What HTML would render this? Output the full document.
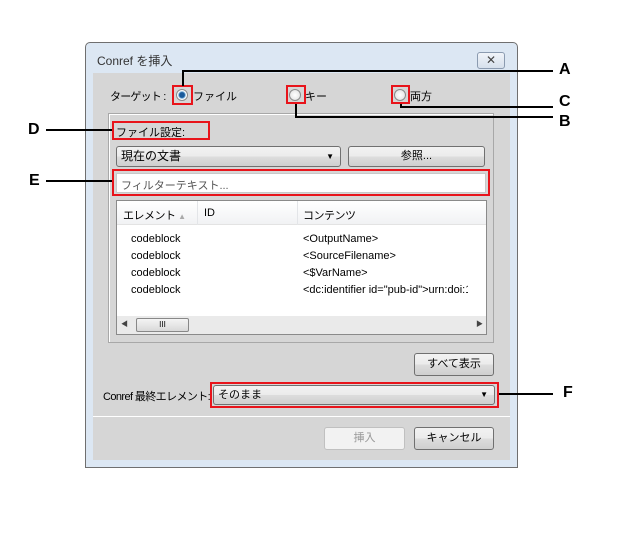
<!DOCTYPE html><html><head><meta charset="utf-8"><style>
body{margin:0;width:618px;height:547px;background:#fff;position:relative;font-family:"Liberation Sans","Noto Sans CJK JP",sans-serif;font-size:11px;color:#000;overflow:hidden}
.a{position:absolute;box-sizing:border-box}
.btn{border:1px solid #707070;border-radius:3px;background:linear-gradient(#f2f2f2,#ebebeb 50%,#dddddd 51%,#cfcfcf);text-align:center;line-height:19px}
.red{border:2px solid #e8141b}
.ln{background:#000}
.lbl{font-weight:bold;font-size:16px}
.rad{width:12px;height:12px;border-radius:50%;border:1px solid #8a8a8a;background:radial-gradient(#fff,#ddd)}
</style></head><body>
<div class="a" style="left:85px;top:42px;width:433px;height:426px;border:1px solid #6f6f6f;border-radius:5px 5px 0 0;background:#dce7f3"></div>
<div class="a" style="left:97px;top:52px;font-size:12px;color:#333">Conref を挿入</div>
<div class="a" style="left:477px;top:52px;width:28px;height:17px;border:1px solid #8b9bb0;border-radius:3px;background:linear-gradient(#f0f4f9,#d6e0ec);text-align:center;font-size:12px;line-height:15px;color:#444">✕</div>
<div class="a" style="left:93px;top:73px;width:417px;height:387px;background:#d6d6d6"></div>
<div class="a" style="left:110px;top:88px;letter-spacing:-0.8px">ターゲット :</div>
<div class="a red" style="left:172px;top:85px;width:21px;height:20px"></div>
<div class="a rad" style="left:176px;top:89px;background:radial-gradient(#1a5a9a 35%,#6aa8d8 45%,#fff 60%)"></div>
<div class="a" style="left:193px;top:88px">ファイル</div>
<div class="a red" style="left:286px;top:85px;width:20px;height:19px"></div>
<div class="a rad" style="left:289px;top:89px"></div>
<div class="a" style="left:305px;top:88px">キー</div>
<div class="a red" style="left:391px;top:85px;width:19px;height:19px"></div>
<div class="a rad" style="left:394px;top:89px"></div>
<div class="a" style="left:410px;top:88px">両方</div>
<div class="a" style="left:108px;top:113px;width:386px;height:230px;border:1px solid #a8a8a8;box-shadow:inset 1px 1px 0 #fff"></div>
<div class="a red" style="left:112px;top:121px;width:98px;height:19px"></div>
<div class="a" style="left:116px;top:124px">ファイル設定:</div>
<div class="a btn" style="left:116px;top:146px;width:225px;height:21px;text-align:left;padding-left:4px;font-size:12px">現在の文書<span style="position:absolute;right:6px;font-size:8px">▼</span></div>
<div class="a btn" style="left:348px;top:146px;width:137px;height:21px">参照...</div>
<div class="a red" style="left:112px;top:169px;width:378px;height:27px"></div>
<div class="a" style="left:116px;top:173px;width:370px;height:20px;background:#fff;border:1px solid #c8c8c8;color:#555;padding:3px 4px">フィルターテキスト...</div>
<div class="a" style="left:116px;top:200px;width:371px;height:135px;background:#fff;border:1px solid #8a8a8a"></div>
<div class="a" style="left:117px;top:201px;width:369px;height:24px;background:linear-gradient(#fff,#f1f2f4);border-bottom:1px solid #e3e3e3"></div>
<div class="a" style="left:197px;top:201px;width:1px;height:24px;background:#e3e5e8"></div>
<div class="a" style="left:297px;top:201px;width:1px;height:24px;background:#e3e5e8"></div>
<div class="a" style="left:123px;top:207px;letter-spacing:-0.5px">エレメント <span style="color:#aaa;font-size:8px">▲</span></div>
<div class="a" style="left:204px;top:207px">ID</div>
<div class="a" style="left:303px;top:207px;letter-spacing:-0.5px">コンテンツ</div>
<div class="a" style="left:131px;top:231px;line-height:17px">codeblock<br>codeblock<br>codeblock<br>codeblock</div>
<div class="a" style="left:303px;top:231px;line-height:17px;width:165px;overflow:hidden;white-space:nowrap">&lt;OutputName&gt;<br>&lt;SourceFilename&gt;<br>&lt;$VarName&gt;<br>&lt;dc:identifier id="pub-id"&gt;urn:doi:10</div>
<div class="a" style="left:117px;top:316px;width:369px;height:18px;background:#eaeaea"></div>
<div class="a" style="left:121px;top:319px;font-size:7px;color:#444">◀</div>
<div class="a" style="left:476px;top:319px;font-size:7px;color:#444">▶</div>
<div class="a" style="left:136px;top:318px;width:53px;height:14px;border:1px solid #888;border-radius:2px;background:linear-gradient(#f4f4f4,#d9d9d9);font-size:8px;text-align:center;line-height:12px">III</div>
<div class="a btn" style="left:414px;top:353px;width:80px;height:23px;line-height:21px">すべて表示</div>
<div class="a" style="left:103px;top:388px;letter-spacing:-0.6px;white-space:nowrap">Conref 最終エレメント:</div>
<div class="a red" style="left:210px;top:382px;width:289px;height:26px"></div>
<div class="a btn" style="left:213px;top:385px;width:282px;height:20px;text-align:left;padding-left:4px;line-height:18px">そのまま<span style="position:absolute;right:6px;font-size:8px">▼</span></div>
<div class="a" style="left:93px;top:416px;width:417px;height:1px;background:#aaa;border-bottom:1px solid #fff"></div>
<div class="a" style="left:324px;top:427px;width:81px;height:23px;border:1px solid #c0c0c0;border-radius:3px;background:#f2f2f2;color:#999;text-align:center;line-height:21px">挿入</div>
<div class="a btn" style="left:414px;top:427px;width:80px;height:23px;line-height:21px">キャンセル</div>
<div class="a ln" style="left:182px;top:70px;width:2px;height:16px"></div>
<div class="a ln" style="left:182px;top:70px;width:371px;height:2px"></div>
<div class="a lbl" style="left:559px;top:61px">A</div>
<div class="a ln" style="left:295px;top:104px;width:2px;height:14px"></div>
<div class="a ln" style="left:295px;top:116px;width:258px;height:2px"></div>
<div class="a lbl" style="left:559px;top:113px">B</div>
<div class="a ln" style="left:400px;top:104px;width:2px;height:4px"></div>
<div class="a ln" style="left:400px;top:106px;width:153px;height:2px"></div>
<div class="a lbl" style="left:559px;top:93px">C</div>
<div class="a ln" style="left:46px;top:129px;width:66px;height:2px"></div>
<div class="a lbl" style="left:28px;top:121px">D</div>
<div class="a ln" style="left:46px;top:180px;width:66px;height:2px"></div>
<div class="a lbl" style="left:29px;top:172px">E</div>
<div class="a ln" style="left:499px;top:393px;width:54px;height:2px"></div>
<div class="a lbl" style="left:563px;top:384px">F</div>
</body></html>
